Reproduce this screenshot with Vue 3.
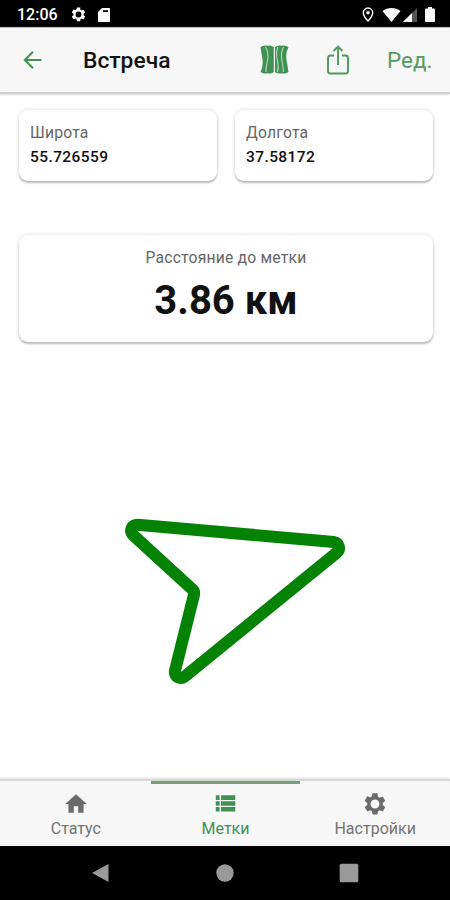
<script setup>
const coords = [
  { label: 'Широта', value: '55.726559' },
  { label: 'Долгота', value: '37.58172' },
]
const gear =
  'M19.14 12.94c.04-.3.06-.61.06-.94s-.02-.64-.07-.94l2.03-1.58a.49.49 0 0 0 .12-.61l-1.92-3.32a.49.49 0 0 0-.59-.22l-2.39.96a7 7 0 0 0-1.62-.94l-.36-2.54A.48.48 0 0 0 13.92 2h-3.84a.48.48 0 0 0-.47.41l-.36 2.54a7 7 0 0 0-1.62.94l-2.39-.96a.48.48 0 0 0-.59.22L2.74 8.87a.48.48 0 0 0 .12.61l2.03 1.58a6 6 0 0 0 0 1.88l-2.03 1.58a.49.49 0 0 0-.12.61l1.92 3.32c.12.22.37.29.59.22l2.39-.96c.5.38 1.03.7 1.62.94l.36 2.54c.05.24.24.41.48.41h3.84c.24 0 .44-.17.47-.41l.36-2.54a7 7 0 0 0 1.62-.94l2.39.96c.22.08.47 0 .59-.22l1.92-3.32a.48.48 0 0 0-.12-.61zM12 16.1a4.1 4.1 0 1 1 0-8.2 4.1 4.1 0 0 1 0 8.2z'
const tabs = [
  { label: 'Статус', path: 'M10 20v-6h4v6h5v-8h3L12 3 2 12h3v8z', active: false },
  {
    label: 'Метки',
    path: 'M3.500 4h3.500v4.200H3.500zM8.300 4H21.500v4.200H8.300zM3.500 9.400h3.500v4.200H3.500zM8.300 9.400H21.500v4.200H8.300zM3.500 14.800h3.500V19H3.500zM8.300 14.800H21.500V19H8.300z',
    active: true,
  },
  { label: 'Настройки', path: gear, active: false },
]
</script>

<template>
  <div class="screen">
    <div class="status">
      <span class="time">12:06</span>
      <svg class="s-gear" viewBox="0 0 24 24"><path :d="gear" fill-rule="evenodd" /></svg>
      <svg class="s-card" viewBox="0 0 12 14">
        <path fill-rule="evenodd" d="M4 0h7a1 1 0 0 1 1 1v12a1 1 0 0 1-1 1H1a1 1 0 0 1-1-1V4zM5 2.200v1.700h5V2.200z" />
      </svg>
      <span class="spacer"></span>
      <svg class="s-pin" viewBox="0 0 12 15">
        <path d="M6 1a4.700 4.700 0 0 0-4.700 4.700C1.300 9 6 14 6 14s4.700-5 4.700-8.300A4.700 4.700 0 0 0 6 1z" fill="none" stroke="#fff" stroke-width="1.400" />
        <circle cx="6" cy="5.700" r="1.800" />
      </svg>
      <svg class="s-wifi" viewBox="0 0 18 14"><path d="M0 3C5-1 13-1 18 3L9 14z" /></svg>
      <svg class="s-signal" viewBox="0 0 14 14">
        <path d="M14 0v14H0z" fill="#555" />
        <path d="M9 5v9H0z" />
      </svg>
      <svg class="s-battery" viewBox="0 0 10 15"><path d="M3 0h4v1.600h2q1 0 1 1V14q0 1-1 1H1q-1 0-1-1V2.600q0-1 1-1h2z" /></svg>
    </div>

    <header class="bar">
      <svg class="back" viewBox="0 0 20 20"><path d="M18.500 10H2M10 1.800 1.800 10l8.200 8.200" /></svg>
      <h1>Встреча</h1>
      <svg class="map" viewBox="0 0 29 29">
        <path class="fold" d="M.5 2Q4-.3 7.500 .8 11-.3 13.800 2V27Q11 29.300 7.500 28.200 4 29.300.5 27 3.500 21 2.500 14.500T.5 2zM15 2Q18-.3 21.500.8 25-.3 28.500 2 25.500 8 26.500 14.500T28.500 27Q25 29.300 21.500 28.200 18 29.300 15 27z" />
        <path class="crease" d="M5.500 2Q9 8 7.500 15T6 27M17.800 2Q15.800 8 17.300 15T17.500 27M23.500 2Q20.500 8 21.800 15T23.500 27" />
      </svg>
      <svg class="share" viewBox="0 0 22 30">
        <path d="M7 10.500H3.500Q1 10.500 1 13v13q0 2.500 2.500 2.500h15Q21 28.500 21 26V13q0-2.500-2.500-2.500H15M11 20V2.500M6.500 6 11 1.500 15.500 6" />
      </svg>
      <span class="edit">Ред.</span>
    </header>

    <main>
      <div class="coords">
        <section v-for="c in coords" :key="c.label" class="card coord">
          <span class="label">{{ c.label }}</span>
          <b>{{ c.value }}</b>
        </section>
      </div>
      <section class="card distance">
        <span class="label">Расстояние до метки</span>
        <strong>3.86 км</strong>
      </section>
      <svg class="pointer" viewBox="0 0 750 600">
        <path d="M80 74 668 126A18 18 0 0 1 677 158L221 530A18 18 0 0 1 192 512L249 284A18 18 0 0 0 244 268L66 105A18 18 0 0 1 80 74z" />
      </svg>
    </main>

    <nav class="tabs">
      <div v-for="t in tabs" :key="t.label" class="tab" :class="{ active: t.active }">
        <svg viewBox="0 0 24 24"><path :d="t.path" fill-rule="evenodd" /></svg>
        <span>{{ t.label }}</span>
      </div>
    </nav>

    <div class="system">
      <svg viewBox="0 0 20 20"><path d="M17.500 1v18L1 10z" /></svg>
      <svg viewBox="0 0 20 20"><circle cx="10" cy="10" r="8.700" /></svg>
      <svg viewBox="0 0 20 20"><rect x=".7" y=".7" width="18.600" height="18.600" rx="1.500" /></svg>
    </div>
  </div>
</template>

<style>
body {
  margin: 0;
}
</style>

<style scoped>
.screen {
  width: 450px;
  height: 900px;
  display: flex;
  flex-direction: column;
  overflow: hidden;
  background: #fff;
  font-family: Roboto, "Liberation Sans", sans-serif;
  color: #111;
}
svg {
  display: block;
  flex: none;
}
.status {
  height: 27px;
  flex: none;
  box-sizing: border-box;
  padding: 2px 15px 0 17px;
  display: flex;
  align-items: center;
  background: #000;
  color: #fff;
}
.status svg {
  fill: #fff;
}
.time {
  width: 41px;
  font-size: 16px;
  font-weight: 500;
  line-height: 20px;
  padding-top: 1px;
}
.s-gear { width: 17px; height: 17px; margin-left: 12px; }
.s-card { width: 12px; height: 14px; margin-left: 11px; }
.spacer { flex: 1; }
.s-pin { width: 12px; height: 15px; margin-right: 8px; }
.s-wifi { width: 19px; height: 14px; margin-right: 2px; }
.s-signal { width: 14px; height: 14px; margin-right: 8px; }
.s-battery { width: 10px; height: 15px; }

.bar {
  height: 67px;
  flex: none;
  box-sizing: border-box;
  padding: 1px 18px 2px 23px;
  display: flex;
  align-items: center;
  background: #f7f7f7;
  border-top: 1px solid #bbb;
  border-bottom: 2px solid #d0d0d0;
  box-shadow: 0 1px 2px #ddd;
}
.back {
  width: 20px;
  height: 20px;
  fill: none;
  stroke: #419152;
  stroke-width: 2;
}
h1 {
  flex: 1;
  margin: 0 0 0 40px;
  padding-top: 2px;
  font-size: 22.8px;
  font-weight: 500;
  line-height: 30px;
}
.map {
  width: 29px;
  height: 29px;
  margin-right: 38px;
}
.fold { fill: #419152; }
.crease { fill: none; stroke: #b9d8bf; stroke-width: 1.1; }
.share {
  width: 22px;
  height: 30px;
  margin-right: 38px;
  fill: none;
  stroke: #4d9a5c;
  stroke-width: 1.9;
}
.edit {
  width: 45px;
  white-space: nowrap;
  color: #559a63;
  font-size: 22.5px;
  line-height: 30px;
}

main {
  flex: 1;
  display: flex;
  flex-direction: column;
  padding: 16px 17px 0 19px;
}
.coords {
  display: grid;
  grid-template-columns: 1fr 1fr;
  gap: 18px;
}
.card {
  box-sizing: border-box;
  display: flex;
  flex-direction: column;
  background: #fff;
  border-radius: 9px;
  box-shadow: 0 2px 2px #bbb, 0 0 4px #ddd;
}
.coord {
  height: 71px;
  padding: 13px 11px 0;
}
.label {
  font-size: 15.7px;
  line-height: 20px;
  letter-spacing: 0.2px;
  color: #666;
}
.coord b {
  margin-top: 5px;
  font-size: 15.5px;
  font-weight: 500;
  line-height: 18px;
  letter-spacing: 0.4px;
}
.distance {
  height: 107px;
  margin-top: 54px;
  padding-top: 13px;
  align-items: center;
}
.distance strong {
  margin-top: 9px;
  font-size: 40px;
  font-weight: 700;
  line-height: 48px;
}
.pointer {
  width: 250px;
  height: 200px;
  margin: 158px 0 0 92px;
}
.pointer path {
  fill: none;
  stroke: #048204;
  stroke-width: 36;
}

.tabs {
  height: 67px;
  flex: none;
  display: grid;
  grid-template-columns: repeat(3, 1fr);
  background: #f7f7f7;
  border-top: 2px solid #d8d8d8;
  box-sizing: border-box;
  padding-left: 1px;
  box-shadow: 0 -1px 2px #ddd;
}
.tab {
  box-sizing: border-box;
  padding-top: 7px;
  border-top: 3px solid transparent;
  display: flex;
  flex-direction: column;
  align-items: center;
  color: #747474;
  font-size: 16px;
  line-height: 20px;
}
.tab.active {
  border-color: #71a37b;
  color: #419152;
}
.tab svg {
  width: 26px;
  height: 26px;
  fill: #6b6b6b;
  margin-bottom: 2px;
}
.tab.active svg {
  fill: #419152;
}
.system {
  height: 54px;
  flex: none;
  box-sizing: border-box;
  padding: 0 91px;
  display: flex;
  align-items: center;
  justify-content: space-between;
  background: #000;
}
.system svg {
  width: 20px;
  height: 20px;
  fill: #999;
}
</style>
